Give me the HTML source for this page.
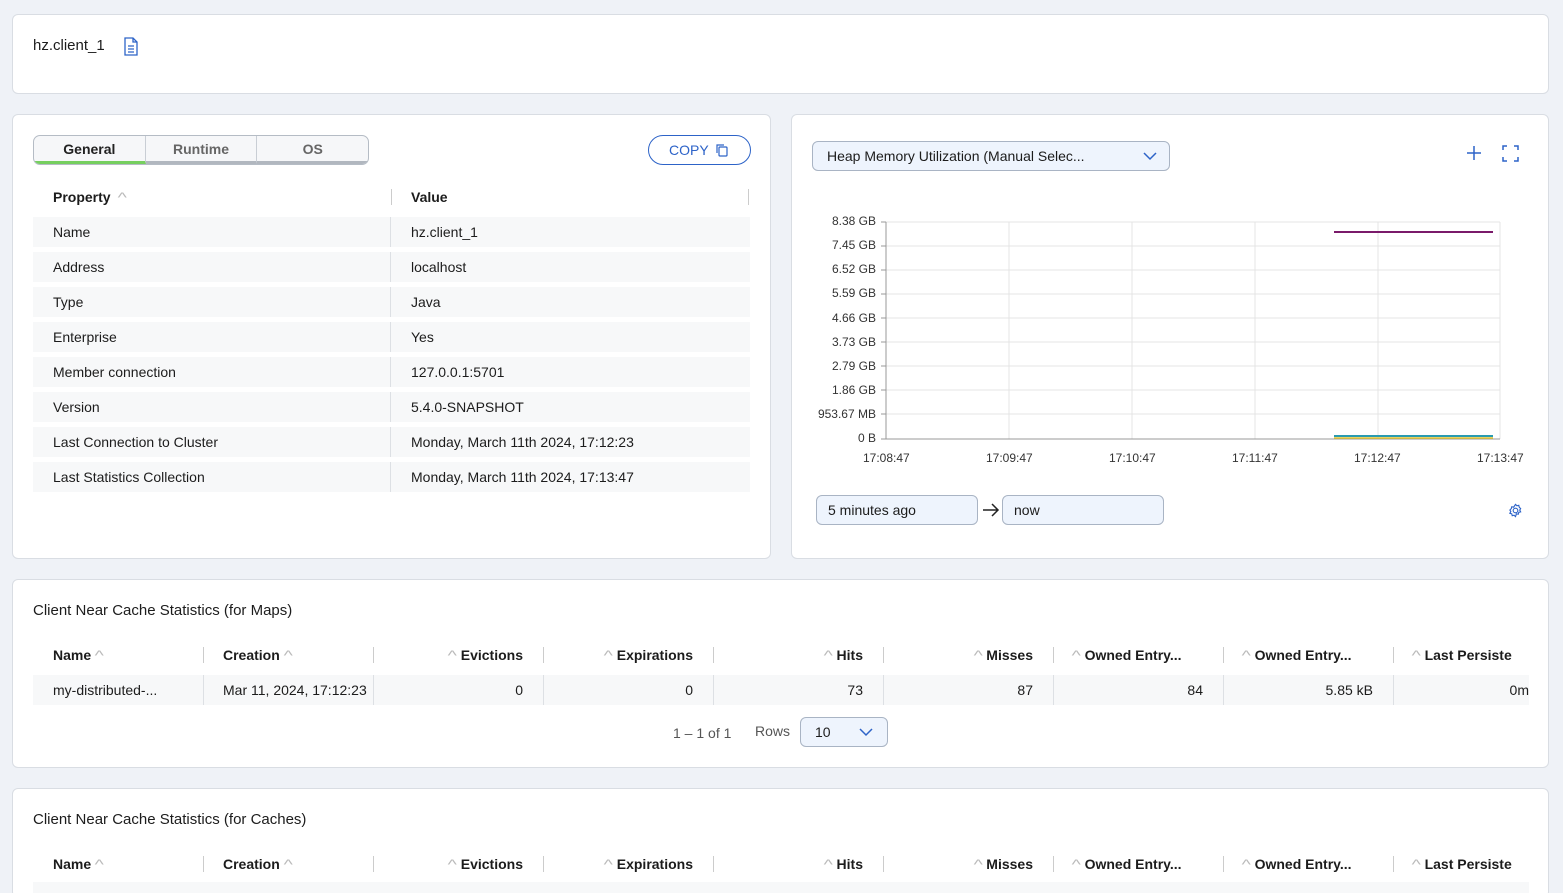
<!DOCTYPE html>
<html><head><meta charset="utf-8"><style>
*{box-sizing:border-box;margin:0;padding:0}
html,body{width:1563px;height:893px;overflow:hidden}
body{background:#eff2f7;font-family:"Liberation Sans",sans-serif;color:#1c1c1c;position:relative;font-size:14px}
.card{position:absolute;background:#fff;border:1px solid #d9dde3;border-radius:6px}
.abs{position:absolute}
.tabs{position:absolute;left:20px;top:20px;width:336px;height:30px;border:1px solid #b5bcc5;border-radius:7px;overflow:hidden;display:flex;background:#f6f7f9}
.tabs div{flex:1;text-align:center;line-height:26px;font-size:14px;font-weight:bold;color:#666;border-right:1px solid #c9ced5;border-bottom:3px solid #b1b7bf}
.tabs div:first-child{color:#222;border-bottom-color:#76cf5f}
.tabs div:last-child{border-right:none}
.row{position:absolute;left:20px;width:717px;height:30px;background:#f7f8f9;font-size:14px;line-height:30px}
.row span{position:absolute}
.row .v{left:378px}.row .k{left:20px}
.row:after{content:"";position:absolute;left:357px;top:0;width:1px;height:30px;background:#dde0e4}
.th{font-weight:bold;font-size:14px}
.hl{position:absolute;width:1px;height:16px;background:#ccc}
.yl{position:absolute;right:0;font-size:12px;color:#333;text-align:right}
.xl{position:absolute;font-size:12px;color:#333}
.tbl{position:absolute;left:20px;width:1496px}
.tbl .h,.tbl .r{position:absolute;height:30px;line-height:30px;font-size:14px;width:170px;white-space:nowrap}
.tbl .h{font-weight:bold}
.tbl .rt{text-align:right;padding-right:20px}
.arr{color:#bbb;font-weight:normal;font-size:14px;display:inline-block;transform:scaleX(1.4);margin:0 5px}
</style></head><body>

<div class="card" style="left:12px;top:14px;width:1537px;height:80px">
<div class="abs" style="left:20px;top:22px;font-size:15px">hz.client_1</div>
<svg class="abs" style="left:110px;top:22px" width="16" height="19" viewBox="0 0 16 19" fill="none" stroke="#2d63c8" stroke-width="1.3"><path d="M2 1h8l4 4v13H2z"/><path d="M10 1v4h4M5 9h6M5 12h6M5 15h6"/></svg>
</div>

<div class="card" style="left:12px;top:114px;width:759px;height:445px">
<div class="tabs"><div>General</div><div>Runtime</div><div>OS</div></div>
<div class="abs" style="left:635px;top:20px;width:103px;height:30px;border:1px solid #2d63c8;border-radius:15px;color:#2d63c8;font-size:14px;line-height:28px;padding-left:20px">COPY
<svg class="abs" style="left:66px;top:7px" width="14" height="14" viewBox="0 0 14 14" fill="none" stroke="#2d63c8" stroke-width="1.2"><rect x="4" y="4" width="8" height="9" rx="1"/><path d="M2 10V2h7"/></svg></div>
<div class="abs th" style="left:40px;top:74px">Property <span class="arr">^</span></div>
<div class="abs th" style="left:398px;top:74px">Value</div>
<div class="hl" style="left:378px;top:74px"></div><div class="hl" style="left:735px;top:74px"></div>
<div class="row" style="top:102px"><span class="k">Name</span><span class="v">hz.client_1</span></div>
<div class="row" style="top:137px"><span class="k">Address</span><span class="v">localhost</span></div>
<div class="row" style="top:172px"><span class="k">Type</span><span class="v">Java</span></div>
<div class="row" style="top:207px"><span class="k">Enterprise</span><span class="v">Yes</span></div>
<div class="row" style="top:242px"><span class="k">Member connection</span><span class="v">127.0.0.1:5701</span></div>
<div class="row" style="top:277px"><span class="k">Version</span><span class="v">5.4.0-SNAPSHOT</span></div>
<div class="row" style="top:312px"><span class="k">Last Connection to Cluster</span><span class="v">Monday, March 11th 2024, 17:12:23</span></div>
<div class="row" style="top:347px"><span class="k">Last Statistics Collection</span><span class="v">Monday, March 11th 2024, 17:13:47</span></div>
</div>

<div class="card" style="left:791px;top:114px;width:758px;height:445px">
<div class="abs" style="left:20px;top:26px;width:358px;height:30px;border:1px solid #a9b4c4;border-radius:6px;background:#eef4fd;font-size:14px;line-height:28px;padding-left:14px">Heap Memory Utilization (Manual Selec...
<svg class="abs" style="left:330px;top:10px" width="14" height="9" viewBox="0 0 14 9" fill="none" stroke="#2d63c8" stroke-width="1.5"><path d="M1 1l6 6 6-6"/></svg></div>
<svg class="abs" style="left:675px;top:31px" width="14" height="14" stroke="#2d63c8" stroke-width="1.5"><path d="M7 0v14M0 7h14"/></svg>
<svg class="abs" style="left:710px;top:30px" width="17" height="17" fill="none" stroke="#2d63c8" stroke-width="1.5"><path d="M1 5V1h4M12 1h4v4M16 12v4h-4M5 16H1v-4"/></svg>
<div class="abs" style="left:0;top:99px;width:84px;height:240px">
<div class="yl" style="top:0">8.38 GB</div><div class="yl" style="top:24px">7.45 GB</div><div class="yl" style="top:48px">6.52 GB</div><div class="yl" style="top:72px">5.59 GB</div><div class="yl" style="top:97px">4.66 GB</div><div class="yl" style="top:121px">3.73 GB</div><div class="yl" style="top:145px">2.79 GB</div><div class="yl" style="top:169px">1.86 GB</div><div class="yl" style="top:193px">953.67 MB</div><div class="yl" style="top:217px">0 B</div>
</div>
<svg class="abs" style="left:89px;top:100px" width="620" height="230">
<g stroke="#e4e4e4" stroke-width="1"><path d="M5 7h614M5 31h614M5 55h614M5 79h614M5 103h614M5 127h614M5 151h614M5 175h614M5 199h614"/><path d="M128 7v217M251 7v217M374 7v217M497 7v217M619 7v217"/></g>
<path d="M5 7v217h614" stroke="#999" fill="none"/>
<path d="M0 7h5M0 31h5M0 55h5M0 79h5M0 103h5M0 127h5M0 151h5M0 175h5M0 199h5M0 224h5" stroke="#999"/>
<path d="M453 17h159" stroke="#7a1a6a" stroke-width="2"/>
<path d="M453 221h159" stroke="#2a9bb0" stroke-width="2"/>
<path d="M453 223h159" stroke="#e0c32a" stroke-width="1.5"/>
</svg>
<div class="xl" style="left:71px;top:336px">17:08:47</div><div class="xl" style="left:194px;top:336px">17:09:47</div><div class="xl" style="left:317px;top:336px">17:10:47</div><div class="xl" style="left:440px;top:336px">17:11:47</div><div class="xl" style="left:562px;top:336px">17:12:47</div><div class="xl" style="left:685px;top:336px">17:13:47</div>
<div class="abs" style="left:24px;top:380px;width:162px;height:30px;border:1px solid #a9b4c4;border-radius:6px;background:#eef4fd;line-height:28px;padding-left:11px">5 minutes ago</div>
<svg class="abs" style="left:190px;top:387px" width="18" height="16" fill="none" stroke="#222" stroke-width="1.5"><path d="M1 8h15M10 2l6 6-6 6"/></svg>
<div class="abs" style="left:210px;top:380px;width:162px;height:30px;border:1px solid #a9b4c4;border-radius:6px;background:#eef4fd;line-height:28px;padding-left:11px">now</div>
<svg class="abs" style="left:716px;top:388px" width="15" height="15" viewBox="0 0 16 16" fill="none" stroke="#2d63c8" stroke-width="1.2"><circle cx="8" cy="8" r="2.5"/><path d="M8 1.5l1.5 1.5 2-.5.5 2 1.5 1.5-1 1.5 1 2-2 .5-.5 2-2-.5L8 14.5 6.5 13l-2 .5-.5-2-2-.5 1-2-1-1.5 1.5-1.5.5-2 2 .5z"/></svg>
</div>

<div class="card" style="left:12px;top:579px;width:1537px;height:189px">
<div class="abs" style="left:20px;top:22px;font-size:15px">Client Near Cache Statistics (for Maps)</div>
<div class="tbl" style="top:60px">
<div class="h" style="left:20px">Name<span class="arr">^</span></div>
<div class="h" style="left:190px">Creation<span class="arr">^</span></div>
<div class="h rt" style="left:340px"><span class="arr">^</span>Evictions</div>
<div class="h rt" style="left:510px"><span class="arr">^</span>Expirations</div>
<div class="h rt" style="left:680px"><span class="arr">^</span>Hits</div>
<div class="h rt" style="left:850px"><span class="arr">^</span>Misses</div>
<div class="h" style="left:1035px"><span class="arr">^</span>Owned Entry...</div>
<div class="h" style="left:1205px"><span class="arr">^</span>Owned Entry...</div>
<div class="h" style="left:1375px;width:121px;overflow:hidden"><span class="arr">^</span>Last Persiste</div>
<div class="hl" style="left:170px;top:7px"></div><div class="hl" style="left:340px;top:7px"></div><div class="hl" style="left:510px;top:7px"></div><div class="hl" style="left:680px;top:7px"></div><div class="hl" style="left:850px;top:7px"></div><div class="hl" style="left:1020px;top:7px"></div><div class="hl" style="left:1190px;top:7px"></div><div class="hl" style="left:1360px;top:7px"></div>
<div class="abs" style="left:0;top:35px;width:1496px;height:30px;background:#f7f8f9"></div>
<div class="r" style="left:20px;top:35px">my-distributed-...</div>
<div class="r" style="left:190px;top:35px;width:150px;overflow:hidden">Mar 11, 2024, 17:12:23</div>
<div class="r rt" style="left:340px;top:35px">0</div>
<div class="r rt" style="left:510px;top:35px">0</div>
<div class="r rt" style="left:680px;top:35px">73</div>
<div class="r rt" style="left:850px;top:35px">87</div>
<div class="r rt" style="left:1020px;top:35px">84</div>
<div class="r rt" style="left:1190px;top:35px">5.85 kB</div>
<div class="r" style="left:1360px;top:35px;text-align:right;width:136px">0m</div>
<div class="abs" style="left:170px;top:35px;width:1px;height:30px;background:#dde0e4"></div><div class="abs" style="left:340px;top:35px;width:1px;height:30px;background:#dde0e4"></div><div class="abs" style="left:510px;top:35px;width:1px;height:30px;background:#dde0e4"></div><div class="abs" style="left:680px;top:35px;width:1px;height:30px;background:#dde0e4"></div><div class="abs" style="left:850px;top:35px;width:1px;height:30px;background:#dde0e4"></div><div class="abs" style="left:1020px;top:35px;width:1px;height:30px;background:#dde0e4"></div><div class="abs" style="left:1190px;top:35px;width:1px;height:30px;background:#dde0e4"></div><div class="abs" style="left:1360px;top:35px;width:1px;height:30px;background:#dde0e4"></div>
</div>
<div class="abs" style="left:660px;top:145px;color:#555">1 – 1 of 1</div>
<div class="abs" style="left:742px;top:143px;color:#555">Rows</div>
<div class="abs" style="left:787px;top:137px;width:88px;height:30px;border:1px solid #a9b4c4;border-radius:6px;background:#eef4fd;line-height:28px;padding-left:14px">10
<svg class="abs" style="left:58px;top:10px" width="14" height="9" fill="none" stroke="#2d63c8" stroke-width="1.5"><path d="M1 1l6 6 6-6"/></svg></div>
</div>

<div class="card" style="left:12px;top:788px;width:1537px;height:110px">
<div class="abs" style="left:20px;top:22px;font-size:15px">Client Near Cache Statistics (for Caches)</div>
<div class="tbl" style="top:60px">
<div class="h" style="left:20px">Name<span class="arr">^</span></div>
<div class="h" style="left:190px">Creation<span class="arr">^</span></div>
<div class="h rt" style="left:340px"><span class="arr">^</span>Evictions</div>
<div class="h rt" style="left:510px"><span class="arr">^</span>Expirations</div>
<div class="h rt" style="left:680px"><span class="arr">^</span>Hits</div>
<div class="h rt" style="left:850px"><span class="arr">^</span>Misses</div>
<div class="h" style="left:1035px"><span class="arr">^</span>Owned Entry...</div>
<div class="h" style="left:1205px"><span class="arr">^</span>Owned Entry...</div>
<div class="h" style="left:1375px;width:121px;overflow:hidden"><span class="arr">^</span>Last Persiste</div>
<div class="hl" style="left:170px;top:7px"></div><div class="hl" style="left:340px;top:7px"></div><div class="hl" style="left:510px;top:7px"></div><div class="hl" style="left:680px;top:7px"></div><div class="hl" style="left:850px;top:7px"></div><div class="hl" style="left:1020px;top:7px"></div><div class="hl" style="left:1190px;top:7px"></div><div class="hl" style="left:1360px;top:7px"></div>
<div class="abs" style="left:0;top:33px;width:1496px;height:30px;background:#f7f8f9"></div>
</div>
</div>
</body></html>
